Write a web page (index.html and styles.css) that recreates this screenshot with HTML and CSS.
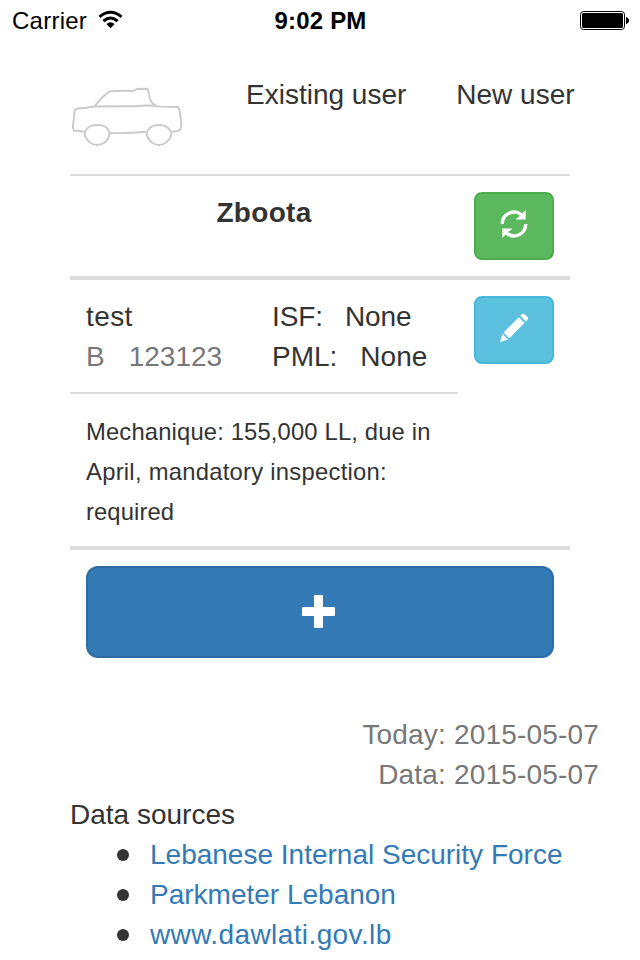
FILE: index.html
```
<!DOCTYPE html>
<html lang="en">
<head>
<meta charset="utf-8">
<title>Zboota</title>
<link rel="stylesheet" href="styles.css">
</head>
<body>
<div class="status">
  <div class="carrier"><span class="carrier-name">Carrier</span>
    <svg class="wifi" width="26" height="20" viewBox="0 0 26 20"><g fill="none" stroke="#000" stroke-width="3"><path d="M1.500 6.8Q12.500-2.200 23.500 6.8"/><path d="M5.400 11.100Q12.500 5 19.600 11.100"/></g><path d="M8.400 14Q12.500 10.600 16.600 14L12.500 18.300Z"/></svg>
  </div>
  <div class="clock">9:02 PM</div>
  <svg class="battery" width="49" height="19" viewBox="0 0 49 19"><rect x=".5" y=".5" width="44" height="18" rx="3" fill="none" stroke="#000"/><rect x="2" y="2" width="41" height="15" rx="1.5"/><path d="M46 6q3 1 3 3.500t-3 3.500z"/></svg>
</div>
<main class="page">
  <header class="header">
    <svg class="car" width="120" height="76" viewBox="0 0 120 76" fill="none" stroke="#cacaca" stroke-width="1.9" stroke-linejoin="round"><path d="M24.300 26.500C29 21 34 14 40 11.300Q52 10.300 63 11L67 9L77.500 8.700C79 12 79 17 80.500 20Q82 24 86 25.500"/><path d="M14.500 51.500L4 50.500Q2.300 48 3 45L5 29.300Q9 27.800 15 28L24 26.500Q46 26 66 26.300Q78 24.500 90 26.600L108 27Q109.500 28 110 34L111.300 42L110.500 49.500Q108 51.500 101.500 51.700"/><path d="M40 53Q58 53.500 76 51.700"/><path d="M14.500 54C16 46 22 45 28 45S39 48 39.500 54C38 62 32 65 27 65S16 61 14.500 54Z"/><path d="M76.500 54C78 47 83 45 89 45S100 48 101.500 54C100 61 94 65 89 65S78 61 76.500 54Z"/></svg>
    <nav class="nav"><a>Existing user</a><a>New user</a></nav>
  </header>
  <section class="row title-row">
    <h1 class="title">Zboota</h1>
    <button class="btn green" aria-label="Refresh"><svg width="28" height="28" viewBox="0 0 28 28"><g fill="none" stroke="#fff" stroke-width="3.400"><path d="M2.300 14A11.700 11.700 0 0 1 21.500 4.900"/><path d="M25.700 14A11.700 11.700 0 0 1 6.500 23.100"/></g><path fill="#fff" d="M25.700 0V9.500H16.200V8.700L19.500 6.300ZM2.300 28V18.500H11.800V19.300L8.500 21.700Z"/></svg></button>
  </section>
  <section class="row car-row">
    <div class="info">
      <div class="facts">
        <div class="plate"><div class="name">test</div><div class="number"><span>B</span><span>123123</span></div></div>
        <div class="fines"><div class="fine"><span>ISF:</span><span>None</span></div><div class="fine pml"><span>PML:</span><span>None</span></div></div>
      </div>
      <p class="note"><span class="n1">Mechanique: 155,000 LL, due in</span><br><span class="n2">April, mandatory inspection:</span><br><span class="n3">required</span></p>
    </div>
    <button class="btn cyan" aria-label="Edit"><svg width="30" height="30" viewBox="0 0 30 30" fill="#fff"><path d="M19.800 4.200L25.500 10L10.300 25.200L4.600 19.500ZM21.200 2.800L22.800 1.300Q24.300 0 25.800 1.300L28.500 4Q29.800 5.500 28.500 7L26.900 8.500ZM3.400 20.800L9 26.400L1 29Z"/></svg></button>
  </section>
  <button class="add" aria-label="Add"><svg width="33" height="33" viewBox="0 0 33 33" fill="#fff"><rect x="12" width="9" height="33" rx="1"/><rect y="12" width="33" height="9" rx="1"/></svg></button>
  <div class="dates"><div>Today: 2015-05-07</div><div>Data: 2015-05-07</div></div>
  <div class="sources">Data sources
    <ul><li><a>Lebanese Internal Security Force</a></li><li><a>Parkmeter Lebanon</a></li><li><a class="l3">www.dawlati.gov.lb</a></li></ul>
  </div>
</main>
</body>
</html>
```
FILE: styles.css
```
* { box-sizing: border-box; }
body { margin: 0; width: 640px; height: 960px; overflow: hidden; background: #fff; color: #333; font: 28px/40px "Liberation Sans", Arial, sans-serif; }
svg { display: block; }
.status { display: grid; grid-template-columns: 1fr auto 1fr; align-items: center; height: 40px; padding: 0 11px 0 12px; color: #000; font-size: 24px; line-height: 38px; }
.carrier { display: flex; align-items: center; gap: 11px; }
.carrier-name { padding-top: 2px; letter-spacing: .25px; }
.wifi { margin: 0; }
.clock { padding-top: 2px; font-weight: bold; letter-spacing: .2px; }
.battery { justify-self: end; }
.page { width: 500px; margin: 40px 0 0 70px; }
.header { display: flex; height: 96px; border-bottom: 2px solid #ddd; }
.car { flex: none; }
.nav { display: flex; flex: none; gap: 50px; margin: -5px 0 0 56px; white-space: nowrap; }
.row { display: flex; justify-content: space-between; padding: 16px 16px 0 0; border-bottom: 4px solid #ddd; }
.title-row { height: 104px; }
.title { width: 388px; margin: 1px 0 0; font-size: 28px; line-height: 40px; text-align: center; letter-spacing: .3px; }
.btn { display: flex; align-items: center; justify-content: center; flex: none; width: 80px; height: 68px; padding: 0; border: 2px solid; border-radius: 8px; }
.btn svg { margin-top: -4px; }
.green { background: #5cb85c; border-color: #4cae4c; }
.cyan { background: #5bc0de; border-color: #46b8da; }
.car-row { height: 270px; }
.info { width: 388px; }
.facts { display: flex; height: 98px; padding: 1px 0 0 16px; border-bottom: 2px solid #ddd; }
.plate { width: 186px; }
.name { letter-spacing: .4px; }
.number { display: flex; gap: 24px; color: #777; }
.fine { display: flex; gap: 22px; letter-spacing: -.1px; }
.fine.pml { gap: 23px; letter-spacing: 0; }
.note { margin: 18px 0 0; padding-left: 16px; font-size: 23.8px; white-space: nowrap; }
.n1 { letter-spacing: .15px; }
.n2 { letter-spacing: .26px; }
.n3 { letter-spacing: .1px; }
.add { display: flex; align-items: center; justify-content: center; width: 468px; height: 92px; margin: 16px 0 0 16px; padding: 0 3px 1px 0; background: #337ab7; border: 2px solid #2e6da4; border-radius: 12px; }
.dates { width: 529px; margin-top: 57px; color: #777; text-align: right; letter-spacing: .18px; }
ul { margin: 0; padding-left: 80px; list-style: none; }
li { display: flex; align-items: center; }
li::before { content: ""; width: 12px; height: 12px; margin: 0 21px 0 -33px; border-radius: 50%; background: #333; }
li a { color: #337ab7; white-space: nowrap; }
.l3 { letter-spacing: .4px; }
```
